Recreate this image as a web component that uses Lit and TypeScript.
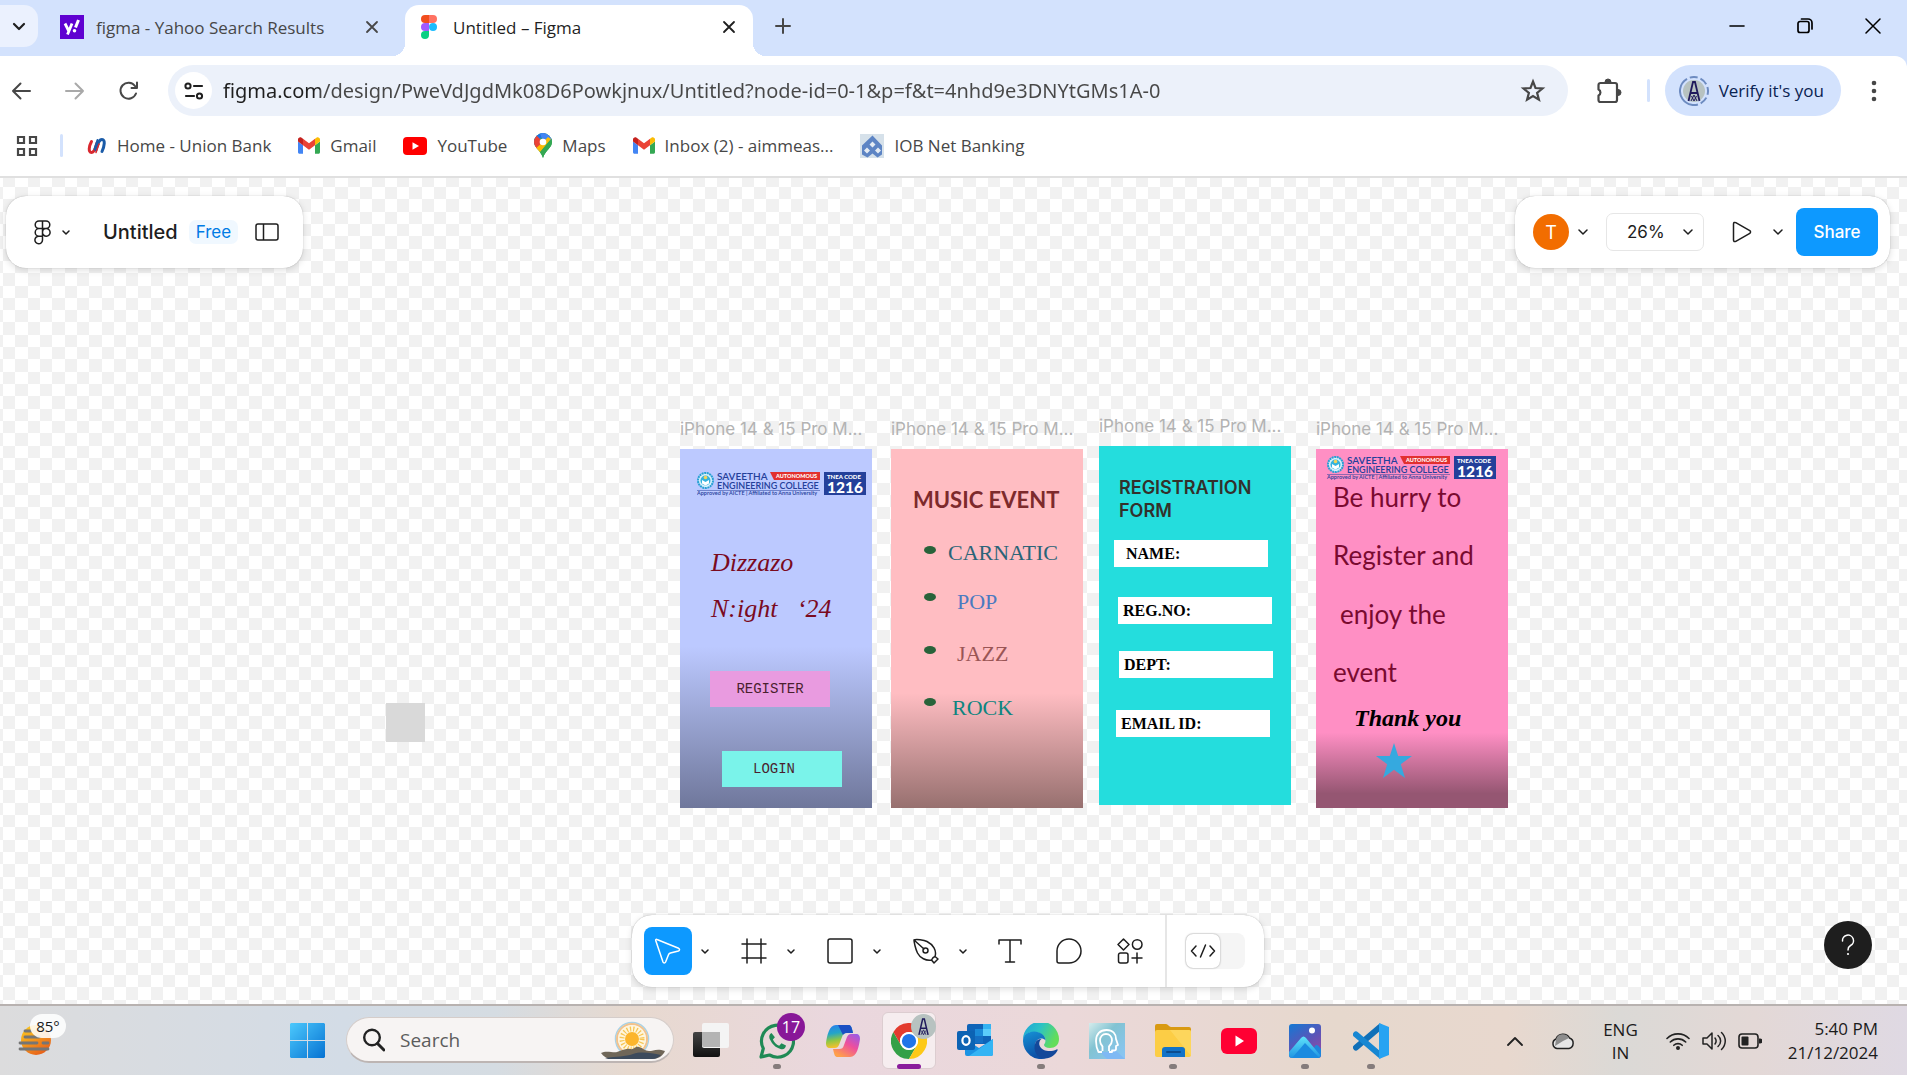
import { LitElement, html, svg, css, nothing, TemplateResult, SVGTemplateResult } from "lit";
import { customElement } from "lit/decorators.js";
import { styleMap } from "lit/directives/style-map.js";
import { classMap } from "lit/directives/class-map.js";

type Drawing = SVGTemplateResult | SVGTemplateResult[];

const icon = (w: number, h: number, body: Drawing, box = `0 0 ${w} ${h}`): TemplateResult =>
  html`<svg width=${w} height=${h} viewBox=${box} fill="none" aria-hidden="true">${body}</svg>`;

const line = (w: number, h: number, d: string, color = "#1e1e1e", width = 1.5): TemplateResult =>
  icon(w, h, svg`<path d=${d} stroke=${color} stroke-width=${width} stroke-linecap="round" stroke-linejoin="round"/>`);

const chevron = line(10, 6, "M1 1l4 4 4-4", "#1e1e1e", 1.5);
const smallChevron = line(8, 5, "M1 1l3 3 3-3");

const gmail = icon(22, 17, svg`
  <path fill="#4285f4" d="M58 108h14V74L52 59v43c0 3.3 2.7 6 6 6"/>
  <path fill="#34a853" d="M120 108h14c3.3 0 6-2.7 6-6V59l-20 15"/>
  <path fill="#fbbc04" d="M120 48v26l20-15v-8c0-7.4-8.5-11.7-14.4-7.2"/>
  <path fill="#ea4335" d="M72 74V48l24 18 24-18v26L96 92"/>
  <path fill="#c5221f" d="M52 51v8l20 15V48l-5.6-4.2C60.5 39.3 52 43.6 52 51"/>`, "52 42 88 66");

const unionBank = icon(20, 18, svg`
  <path d="M4.500 4.500C2 9 1 15.500 4.500 15.500S8.500 10 10 6" stroke="#d9282f" stroke-width="3" stroke-linecap="round"/>
  <path d="M9 13C10.500 8 11.500 2.500 15 2.500S17.500 9 15 14.500" stroke="#1a5ba8" stroke-width="3" stroke-linecap="round"/>
  <path d="M7.500 12L10.500 3" stroke="#1a5ba8" stroke-width="2" stroke-linecap="round"/>
  <path d="M9 15.500l3-8.500" stroke="#d9282f" stroke-width="1.500" stroke-linecap="round"/>`);

const youtube = icon(24, 18, svg`
  <rect width="24" height="18" rx="4" fill="#f00"/><path d="M9.500 5.200l6.500 3.800-6.500 3.800z" fill="#fff"/>`);

const mapsPin = icon(18, 25, svg`
  <clipPath id="pin"><path d="M9 0a9 9 0 0 1 9 9c0 6-6.500 8-9 16C6.500 17 0 15 0 9a9 9 0 0 1 9-9z"/></clipPath>
  <g clip-path="url(#pin)">
    <rect width="18" height="25" fill="#34a853"/>
    <path d="M-2 14L18-6V-9H-2z" fill="#1a73e8"/>
    <path d="M6 0h14v7L9 9z" fill="#4285f4"/>
    <path d="M-1 3l3-1 7 7-7 9-3-5z" fill="#ea4335"/>
    <path d="M1 16L9 9l5-5 3 2L6 19z" fill="#fbbc04"/>
    <path d="M18 5L5 21l4 5 10-12z" fill="#34a853"/>
  </g>
  <circle cx="9" cy="9" r="3.300" fill="#fff"/>`);

const iob = icon(24, 24, svg`
  <rect width="24" height="24" fill="#d6e1ea"/>
  <path d="M12.500 1.500L22 11.500v9l-4.500 3-5-4-5 4-5.500-3v-9z" fill="#5d84c4"/>
  <path d="M12.500 7.500l3 3-3 3-3-3zM7 13.500l3 3-3 3-3-3zM18 13.500l3 3-3 3-3-3z" fill="#e4ebf3"/>`);

const figmaColor = icon(16, 24, svg`
  <path d="M4 0h4v8H4a4 4 0 0 1 0-8z" fill="#f24e1e"/><path d="M8 0h4a4 4 0 0 1 0 8H8z" fill="#ff7262"/>
  <path d="M4 8h4v8H4a4 4 0 0 1 0-8z" fill="#a259ff"/><circle cx="12" cy="12" r="4" fill="#1abcfe"/>
  <path d="M4 16h4v4a4 4 0 1 1-4-4z" fill="#0acf83"/>`);

const yahoo = icon(24, 24, svg`
  <rect width="24" height="24" fill="#5f01d1"/>
  <path d="M5 8.500l3.500 7M12 8.500L7.500 19.500" stroke="#fff" stroke-width="2.800"/>
  <path d="M18.500 5L15.500 12.500" stroke="#fff" stroke-width="3"/><circle cx="14.500" cy="15.800" r="1.800" fill="#fff"/>`);

const tower = (size: number, ring: boolean): TemplateResult => icon(size, size, svg`
  ${ring ? svg`<circle cx="15" cy="15" r="14" stroke="#6d8bc0" stroke-width="2" stroke-dasharray="34 3 8 3 8 3 8 3 8 3 8" transform="rotate(100 15 15)"/>` : nothing}
  <circle cx="15" cy="15" r=${ring ? 11 : 15} fill="#b7c2c0"/>
  <path d="M9.500 25L14 6h2l4.500 19M11.500 17h7" stroke="#201a5c" stroke-width="1.800"/>
  <path d="M12 25l3-6 3 6M12.500 20l2.500 5 2.500-5" stroke="#201a5c" stroke-width="1"/>`, "0 0 30 30");

const chrome = icon(36, 36, svg`
  <path d="M13.600 30L3.200 12A24 24 0 0 0 24 48l10.400-18a12 12 0 0 1-20.800 0z" fill="#34a047"/>
  <path d="M34.400 30L24 48a24 24 0 0 0 20.800-36H24a12 12 0 0 1 10.400 18z" fill="#fdc918"/>
  <path d="M3.200 12a24 24 0 0 1 41.600 0H24a12 12 0 0 0-10.400 18z" fill="#e33b2e"/>
  <circle cx="24" cy="24" r="12" fill="#fff"/><circle cx="24" cy="24" r="9.500" fill="#1f74e8"/>`, "0 0 48 48");

const taskIcons: Record<string, TemplateResult> = {
  view: icon(36, 36, svg`
    <defs><linearGradient id="tv" x2="0" y2="1"><stop stop-color="#444"/><stop offset="1" stop-color="#111"/></linearGradient></defs>
    <rect y="9" width="27" height="25" rx="2" fill="url(#tv)"/><rect x="9" width="27" height="25" rx="2" fill="#f4f4f4"/>
    <path d="M9 9h18v15H11a2 2 0 0 1-2-2z" fill="#b4b4b4"/>`),
  whatsapp: icon(36, 36, svg`
    <path d="M2 34l2.300-8.500A16 16 0 1 1 10.500 32z" stroke="#1f8a55" stroke-width="3.200" stroke-linejoin="round"/>
    <path d="M12.500 10c-2 1-3 3.500-1.500 6.500 2.500 5 5.500 8 10.500 9.500 3 1 5-.5 5.500-3.500l-4.500-2.300-2.300 2.500c-3-1.200-5-3.200-6.300-6.200l2-2.300z" fill="#1f8a55"/>`),
  copilot: icon(34, 32, svg`
    <defs>
      <linearGradient id="cpa" x1="0" y1="0" x2=".2" y2="1"><stop stop-color="#2a7cf0"/><stop offset=".4" stop-color="#23a5c8"/><stop offset=".7" stop-color="#8fc744"/><stop offset="1" stop-color="#f6c02c"/></linearGradient>
      <linearGradient id="cpb" x1="1" y1="0" x2=".3" y2="1"><stop stop-color="#8f5cf0"/><stop offset=".5" stop-color="#ee4f9d"/><stop offset="1" stop-color="#ffa04a"/></linearGradient>
    </defs>
    <path d="M10 0h12c3 0 3.500 2 4.300 5L27 8h-6c-3 0-4 1-5 4l-3 8c-1 2-2 3-4 3H4c-3 0-4-2-4-5C1 11 3 0 10 0z" fill="url(#cpa)"/>
    <path d="M12 0h10c3 0 3.500 2 4.300 5L27 8h-6c-2 0-3 .5-4 2z" fill="#1b4fc4"/>
    <path d="M24 32H12c-3 0-3.500-2-4.300-5L7 24h6c3 0 4-1 5-4l3-8c1-2 2-3 4-3h5c3 0 4 2 4 5-1 7-3 18-10 18z" fill="url(#cpb)"/>`),
  chrome,
  outlook: icon(36, 36, svg`
    <rect x="10" y="1" width="24" height="20" rx="2" fill="#0f64b8"/><path d="M18 6h8v7h-8z" fill="#1b8ad8"/><path d="M26 1h8v12h-8z" fill="#35b3f2"/><path d="M26 6h8v7h-8z" fill="#5bcdfb"/><path d="M18 13h8v7h-8z" fill="#156fc4"/>
    <path d="M8 16l14 9 14-9v15a2 2 0 0 1-2 2H10a2 2 0 0 1-2-2z" fill="#1a93e4"/><path d="M36 16L12 33h22a2 2 0 0 0 2-2z" fill="#34b4f4"/>
    <rect y="8" width="18" height="19" rx="2" fill="#0c63b4"/>
    <ellipse cx="9" cy="17.500" rx="3.600" ry="4.300" stroke="#fff" stroke-width="2.200"/>`),
  edge: icon(36, 36, svg`
    <defs>
      <linearGradient id="ega" x2="1" y2=".4"><stop stop-color="#1fa3dc"/><stop offset=".5" stop-color="#2cc3c4"/><stop offset="1" stop-color="#63dd5a"/></linearGradient>
      <linearGradient id="egb" x2=".3" y2="1"><stop stop-color="#1693d6"/><stop offset="1" stop-color="#0c4fa6"/></linearGradient>
    </defs>
    <path d="M0 17A18 18 0 0 1 36 16c0 6-4 9-9 9-4 0-6-1.500-6-3 0-1 1.500-1.500 1.500-4.500C22.500 12 16 9 11 9 5 9 1 12 0 17z" fill="url(#ega)"/>
    <path d="M0 18C0 12 5 8.500 11 8.500c6 0 11.500 3.500 11.500 9 0 0-1-2-4.500-2-4 0-6 4-6 7.500 0 6 5 12 11 12.300A18 18 0 0 1 0 18z" fill="url(#egb)"/>
    <path d="M12.500 19.500C9 28 15 36 22 35.600c6-.6 10.500-4.200 12.500-8.200.5-1-.3-1.400-1-1-6 3.200-14 1.600-16.500-3-1.500-2.800-.5-6 1.500-7.400-2.500-.2-5 1-6 3.500z" fill="#13489a"/>`),
  head: icon(36, 36, svg`
    <defs><linearGradient id="hd" x2="1" y2="1"><stop stop-color="#d5ecec"/><stop offset=".4" stop-color="#82c3d2"/><stop offset="1" stop-color="#8ac5f6"/></linearGradient></defs>
    <rect width="36" height="36" fill="url(#hd)"/><path d="M11 29h8l6-3 11 10H18z" fill="#7fb9f4"/>
    <path d="M13 29H9.500C8 26 7 22 7 18 7 11 11 7 17.500 7S27 11 27 16l2 6-2 1v3q0 1.500-2 1.500h-2V29h-3" stroke="#fff" stroke-width="1.800" stroke-linejoin="round"/>
    <path d="M13.500 28v-4.500c-2-2-2.500-4-2.500-6 0-4 2.500-6.500 6-6.500s6 2.500 6 6.500c0 2-1 4-3 6V28" stroke="#fff" stroke-width="1.800"/>`),
  folder: icon(36, 33, svg`
    <path d="M0 2a2 2 0 0 1 2-2h9c2 0 3 3 5 3h18a2 2 0 0 1 2 2v8H0z" fill="#d99a12"/>
    <rect y="6" width="36" height="27" rx="2" fill="#fccd45"/><path d="M15 6h19a2 2 0 0 1 2 2v24z" fill="#fdd65c"/>
    <path d="M7 33v-7a3 3 0 0 1 3-3h17a3 3 0 0 1 3 3v7z" fill="#1273c8"/><path d="M12 28h13" stroke="#0b4c8f" stroke-width="2" stroke-linecap="round"/>`),
  youtube: icon(36, 26, svg`<rect width="36" height="26" rx="6" fill="#ff0033"/><path d="M14.500 7.500L23 13l-8.500 5.500z" fill="#fff"/>`),
  photos: icon(34, 34, svg`
    <defs><linearGradient id="ph" x2=".6" y2="1"><stop stop-color="#1379d4"/><stop offset=".6" stop-color="#5b55b8"/><stop offset="1" stop-color="#8b4aa8"/></linearGradient>
    <linearGradient id="pm" x2="0" y2="1"><stop stop-color="#5fe3fb"/><stop offset="1" stop-color="#1f94e2"/></linearGradient></defs>
    <rect x="1" width="32" height="34" rx="3" fill="url(#ph)"/><circle cx="24" cy="6.500" r="3" fill="#fff"/>
    <path d="M20 34l7-12c1-1.500 2.500-1 3.500 0l2.500 3v6a3 3 0 0 1-3 3z" fill="#1d86dd"/>
    <path d="M1 28L13 14c1.500-2 3.500-2 5 0l14 17a3 3 0 0 1-2 3H4a3 3 0 0 1-3-3z" fill="url(#pm)"/>
    <path d="M4 34l13-15 14 14.500-1 .5z" fill="#1b8be0"/>`),
  vscode: icon(36, 36, svg`
    <path d="M3 24.500L27 4" stroke="#1070b8" stroke-width="6" stroke-linecap="round"/>
    <path d="M3 11.500L27 32" stroke="#1787d2" stroke-width="6" stroke-linecap="round"/>
    <path d="M26 0l10 4v28l-10 4z" fill="#27a3f2"/>`),
};

const tasks: { id: string; label: string; open?: boolean; badge?: string }[] = [
  { id: "view", label: "Task view" },
  { id: "whatsapp", label: "WhatsApp", open: true, badge: "17" },
  { id: "copilot", label: "Copilot" },
  { id: "chrome", label: "Chrome" },
  { id: "outlook", label: "Outlook" },
  { id: "edge", label: "Edge", open: true },
  { id: "head", label: "Assistant" },
  { id: "folder", label: "File Explorer", open: true },
  { id: "youtube", label: "YouTube" },
  { id: "photos", label: "Photos", open: true },
  { id: "vscode", label: "Visual Studio Code", open: true },
];

const bookmarks: { text: string; art: TemplateResult }[] = [
  { text: "Home - Union Bank", art: unionBank },
  { text: "Gmail", art: gmail },
  { text: "YouTube", art: youtube },
  { text: "Maps", art: mapsPin },
  { text: "Inbox (2) - aimmeas...", art: gmail },
  { text: "IOB Net Banking", art: iob },
];

/* Checkerboard tile: 16 cells across 197 units, each edge on a whole pixel. */
const CELLS = 16;
const TILE = 197;
const edge = (i: number) => Math.round((i * TILE) / CELLS);
const checkerPath = Array.from({ length: CELLS * CELLS }, (_, n) => [n % CELLS, Math.floor(n / CELLS)])
  .filter(([c, r]) => (c + r) % 2 === 1)
  .map(([c, r]) => `M${edge(c)} ${edge(r)}H${edge(c + 1)}V${edge(r + 1)}H${edge(c)}z`)
  .join("");

const place = (x: number, y: number) => styleMap({ left: `${x}px`, top: `${y}px` });

const collegeLogo = (width: number) => html`
  <svg width=${width} height="24" viewBox="0 0 170 24" role="img" aria-label="Saveetha Engineering College">
    <circle cx="8.500" cy="8.500" r="7.500" fill="#d9f1fb" stroke="#27a0d4" stroke-width="2" stroke-dasharray="2 .6"/>
    <circle cx="8.500" cy="8.500" r="5" fill="#35b3de"/>
    <path d="M5 8l3.500 2L12 8v3.500l-3.500 2-3.500-2z" fill="#fff"/><circle cx="8.500" cy="5.500" r="1.800" fill="#f4d35a"/>
    <path d="M73 0h50v8H77z" fill="#e2302f"/>
    <g font-family="Lato, sans-serif" fill="#24409a">
      <text x="20" y="8" font-size="10" font-weight="600">SAVEETHA</text>
      <text x="20" y="17" font-size="9" font-weight="600">ENGINEERING COLLEGE</text>
      <path d="M0 18h123v.6H0z"/>
      <text x="0" y="23" font-size="5.500" font-weight="600">Approved by AICTE | Affiliated to Anna University</text>
      <rect x="127" width="42" height="23"/>
    </g>
    <g font-family="Lato, sans-serif" fill="#fff" font-weight="900">
      <text x="79" y="6" font-size="5.500">AUTONOMOUS</text>
      <text x="130" y="7" font-size="6">TNEA CODE</text>
      <text x="130" y="21" font-size="15.500">1216</text>
    </g>
  </svg>`;

@customElement("browser-chrome")
export class BrowserChrome extends LitElement {
  static styles = css`
    :host { display: block; font-family: "Open Sans", "Noto Sans", sans-serif; color: #474747; background: #d3e2fd; }
    svg { display: block; flex: none; }
    button { font: inherit; color: inherit; border: 0; padding: 0; background: none; display: flex; align-items: center; justify-content: center; }
    .tabs { display: flex; height: 56px; padding-top: 5px; box-sizing: border-box; align-items: flex-start; font-size: 17px; }
    .search { width: 38px; height: 42px; border-radius: 0 14px 14px 0; background: #ebf1fe; }
    .tab { display: flex; align-items: center; height: 44px; box-sizing: border-box; }
    .tab .title { flex: 1; text-align: left; white-space: nowrap; }
    .idle { width: 354px; margin-right: 13px; padding: 0 13px 0 22px; }
    .idle .title { margin-left: 12px; }
    .active { position: relative; width: 348px; height: 51px; padding: 0 17px 7px 16px; background: #fff; border-radius: 14px 14px 0 0; color: #1f1f1f; }
    .active .title { margin-left: 16px; }
    .active::before, .active::after { content: ""; position: absolute; bottom: 0; width: 13px; height: 13px; }
    .active::before { right: 100%; background: radial-gradient(circle at 0 0, transparent 13px, #fff 13px); }
    .active::after { left: 100%; background: radial-gradient(circle at 100% 0, transparent 13px, #fff 13px); }
    .new { width: 60px; height: 42px; }
    .window { margin-left: auto; display: flex; height: 42px; }
    .window button { width: 68px; }
    .tools { display: flex; align-items: center; height: 69px; background: #fff; border-radius: 0 12px 0 0; }
    .nav { width: 54px; height: 48px; }
    .nav:first-child { width: 48px; padding-right: 6px; }
    .address { flex: 1; display: flex; align-items: center; height: 51px; margin: 0 0 0 12px; border-radius: 26px; background: #ecf1fa; padding: 0 20px 0 7px; }
    .site { width: 37px; height: 37px; border-radius: 50%; background: #fff; flex: none; }
    .url { flex: 1; min-width: 0; border: 0; outline: 0; padding: 0; margin: 0 11px; height: 40px; font: 20px "Noto Sans", "Open Sans", sans-serif; color: transparent; background: linear-gradient(90deg, #1f1f1f 97px, #474747 97px); -webkit-background-clip: text; background-clip: text; }
    .ext { width: 79px; height: 48px; padding-left: 4px; }
    .bar { width: 3px; height: 23px; background: #d3e2fd; border-radius: 2px; }
    .profile { height: 51px; margin-left: 15px; padding: 0 17px 0 14px; border-radius: 26px; background: #d3e2fd; color: #0a2351; font-size: 17px; gap: 10px; }
    .menu { width: 66px; height: 48px; }
    .marks { display: flex; align-items: center; height: 53px; box-sizing: border-box; background: #fff; border-bottom: 2px solid #e0e0e0; font-size: 17px; padding: 0 0 10px 16px; }
    .marks .bar { margin: 0 24px 0 22px; }
    .marks nav { display: flex; gap: 27px; }
    .marks a { display: flex; align-items: center; gap: 10px; color: inherit; text-decoration: none; white-space: nowrap; }
  `;

  render() {
    return html`
      <div class="tabs">
        <button class="search" aria-label="Search tabs">${line(14, 9, "M2 2l5 5 5-5", "#1f1f1f", 2.2)}</button>
        <div class="tab idle">${yahoo}<span class="title">figma - Yahoo Search Results</span>
          <button aria-label="Close tab">${line(14, 14, "M2 2l10 10M12 2L2 12", "#474747", 1.8)}</button></div>
        <div class="tab active">${figmaColor}<span class="title">Untitled – Figma</span>
          <button aria-label="Close tab">${line(14, 14, "M2 2l10 10M12 2L2 12", "#1f1f1f", 1.8)}</button></div>
        <button class="new" aria-label="New tab">${line(16, 16, "M8 1v14M1 8h14", "#474747", 2)}</button>
        <div class="window">
          <button aria-label="Minimise">${line(16, 16, "M1 8h14", "#000", 1.6)}</button>
          <button aria-label="Restore">${line(16, 16, "M1 5.500a2 2 0 0 1 2-2h7a2 2 0 0 1 2 2v7a2 2 0 0 1-2 2H3a2 2 0 0 1-2-2zM4.500 1H11a4 4 0 0 1 4 4v6", "#000", 1.7)}</button>
          <button aria-label="Close">${line(16, 16, "M1 1l14 14M15 1L1 15", "#000", 1.5)}</button>
        </div>
      </div>
      <div class="tools">
        <button class="nav" aria-label="Back">${line(20, 18, "M19 9H2M9.500 1.500L2 9l7.500 7.500", "#474747", 2)}</button>
        <button class="nav" aria-label="Forward">${line(20, 18, "M1 9h17M10.500 1.500L18 9l-7.500 7.500", "#a9a9a9", 2)}</button>
        <button class="nav" aria-label="Reload">${line(20, 20, "M17 12.500A8 8 0 1 1 16 5l1.500 2M18 1.500V7h-5.500", "#474747", 2)}</button>
        <form class="address">
          <button type="button" class="site" aria-label="Site information">${icon(20, 18, svg`
            <circle cx="4" cy="4" r="2.600" stroke="#1f1f1f" stroke-width="2"/><path d="M10 4h8M2 14h8" stroke="#1f1f1f" stroke-width="2.200" stroke-linecap="round"/><circle cx="15.500" cy="14" r="2.600" stroke="#1f1f1f" stroke-width="2"/>`)}</button>
          <input class="url" type="text" aria-label="Address" value="figma.com/design/PweVdJgdMk08D6Powkjnux/Untitled?node-id=0-1&amp;p=f&amp;t=4nhd9e3DNYtGMs1A-0">
          <button type="button" aria-label="Bookmark this tab">${icon(30, 30, svg`<path d="M15 5.500l2.500 6.500 7 .5-5.400 4.400 1.800 6.800-5.900-3.700-5.900 3.700 1.800-6.800L5.500 12.500l7-.5z" stroke="#474747" stroke-width="2.200"/>`)}</button>
        </form>
        <button class="ext" aria-label="Extensions">${icon(26, 26, svg`
          <path d="M2.500 7a2 2 0 0 1 2-2H19a2 2 0 0 1 2 2v15a2 2 0 0 1-2 2H4.500a2 2 0 0 1-2-2v-4.500a3.300 3.300 0 0 0 0-6z" stroke="#474747" stroke-width="2.200" stroke-linejoin="round"/>
          <path d="M9 4a3 3 0 0 1 6 0zM22 11.500a3 3 0 0 1 0 6z" fill="#474747" stroke="#474747"/>`)}</button>
        <span class="bar"></span>
        <button class="profile">${tower(30, true)}<span>Verify it's you</span></button>
        <button class="menu" aria-label="Menu">${icon(6, 22, svg`<g fill="#474747"><circle cx="3" cy="3" r="2.300"/><circle cx="3" cy="11" r="2.300"/><circle cx="3" cy="19" r="2.300"/></g>`)}</button>
      </div>
      <div class="marks">
        <button aria-label="Apps">${icon(22, 22, svg`<g stroke="#474747" stroke-width="2.200"><path d="M2 2h6v6H2zM14 2h6v6h-6zM2 14h6v6H2zM14 14h6v6h-6z"/></g>`)}</button>
        <span class="bar"></span>
        <nav>${bookmarks.map((b) => html`<a href="#">${b.art}<span>${b.text}</span></a>`)}</nav>
      </div>`;
  }
}

@customElement("design-canvas")
export class DesignCanvas extends LitElement {
  static styles = css`
    :host { display: block; position: relative; overflow: hidden; background: #fff; font-family: Inter, sans-serif; color: #1e1e1e; }
    svg { display: block; flex: none; }
    button, select { font: inherit; color: inherit; border: 0; padding: 0; background: none; display: flex; align-items: center; justify-content: center; }
    .checker { position: absolute; inset: 0; width: 100%; height: 100%; }
    .panel { position: absolute; display: flex; align-items: center; height: 72px; box-sizing: border-box; background: #fff; border-radius: 20px; box-shadow: 0 0 1px #0005, 0 2px 7px #0002; }
    .file { left: 6px; top: 18px; padding: 0 24px 0 28px; font-size: 18px; }
    .brand { gap: 11px; }
    .name { margin: 0 0 0 33px; font-size: 20px; line-height: 24px; font-weight: 500; }
    .plan { margin: 0 17px 0 11px; height: 24px; padding: 0 7px; border-radius: 7px; background: #f0f8ff; color: #007be5; font-size: 17px; line-height: 24px; }
    .share-bar { right: 17px; top: 18px; padding: 0 12px 0 18px; font-size: 17px; }
    .me { gap: 9px; }
    .avatar { display: flex; align-items: center; justify-content: center; width: 36px; height: 36px; border-radius: 50%; background: #f26d00; color: #fff; font-size: 18px; }
    .zoom { position: relative; display: flex; align-items: center; margin: 0 28px 0 18px; }
    .zoom select { appearance: none; width: 98px; height: 38px; padding: 0 20px; border: 1px solid #e6e6e6; border-radius: 7px; }
    .zoom svg { position: absolute; right: 11px; pointer-events: none; }
    .present { gap: 21px; }
    .share { margin-left: 13px; width: 82px; height: 48px; border-radius: 8px; background: #0d99ff; color: #fff; font-weight: 500; }
    .dock { left: 50%; bottom: 17px; width: 632px; margin-left: -322px; padding-left: 12px; }
    .tool { width: 48px; height: 48px; border-radius: 8px; }
    .slim { width: 44px; }
    .apart { margin-left: 13px; }
    .on { background: #0d99ff; }
    .more { width: 26px; height: 48px; margin-right: 12px; }
    .dev { display: flex; align-items: center; margin-left: 11px; border-left: 2px solid #e6e6e6; height: 72px; padding-left: 18px; }
    .switch { position: relative; display: flex; width: 60px; height: 36px; border-radius: 8px; background: #f5f5f5; }
    .switch input { appearance: none; margin: 0; width: 60px; height: 36px; }
    .knob { position: absolute; left: 1px; top: 1px; width: 34px; height: 34px; border-radius: 7px; background: #fff; box-shadow: 0 0 2px #0006; display: flex; align-items: center; justify-content: center; }
    .help { position: absolute; right: 35px; bottom: 35px; width: 48px; height: 48px; border-radius: 50%; background: #1e1e1e; }
    .square, .board, .tag, .board > * { position: absolute; }
    .square { width: 39px; height: 39px; background: #d9d9d9; }
    .tag { font-size: 17px; line-height: 20px; color: #b3b3b3; white-space: nowrap; }
    .board { width: 192px; height: 359px; overflow: hidden; }
    .board > * { margin: 0; white-space: pre; line-height: 24px; }
    .board > .art { white-space: normal; }
    .welcome { background: linear-gradient(#bcc9ff 55%, #6f779b); }
    .events { background: linear-gradient(#ffbdc2 68%, #97706f); }
    .form { background: #24dddd; }
    .thanks { background: linear-gradient(#ff8fc4 79%, #955672 96%); }
    .script { font: italic 26px "Liberation Serif", serif; color: #7a0a1e; }
    .cta { width: 120px; height: 36px; font: 14px "Liberation Mono", monospace; color: #4a1f2e; }
    .pink { background: #e99be0; }
    .aqua { background: #7af3ea; padding-right: 16px; }
    .heading { font: bold 22px Lato, sans-serif; color: #7d2a2c; }
    .dot { width: 12px; height: 8px; border-radius: 50%; background: #28633a; }
    .genre { font: 22px "Liberation Serif", serif; }
    .teal { color: #2b6478; } .blue { color: #4a7ac0; } .brown { color: #9a5555; } .green { color: #0e8580; }
    .board > .title { font: 600 18px Inter, sans-serif; line-height: 23px; color: #33302b; }
    .field { display: flex; align-items: center; width: 154px; height: 27px; box-sizing: border-box; background: #fff; color: #000; font: bold 16px "Liberation Serif", serif; }
    .field input { flex: 1; min-width: 0; height: 20px; border: 0; padding: 0; outline: 0; background: none; }
    .inset { padding-left: 12px; }
    .near { padding-left: 5px; }
    .note { font: 26px Lato, sans-serif; color: #7a0a30; }
    .bye { font: italic bold 24px "Liberation Serif", serif; color: #000; }
  `;

  private artboards() {
    const dots = [97, 144, 197, 249];
    const genres = [
      { t: "CARNATIC", x: 57, y: 91, c: "teal" },
      { t: "POP", x: 66, y: 140, c: "blue" },
      { t: "JAZZ", x: 66, y: 192, c: "brown" },
      { t: "ROCK", x: 61, y: 246, c: "green" },
    ];
    const fields = [
      { t: "NAME:", x: 15, y: 94, pad: "inset" },
      { t: "REG.NO:", x: 19, y: 151, pad: "near" },
      { t: "DEPT:", x: 20, y: 205, pad: "near" },
      { t: "EMAIL ID:", x: 17, y: 264, pad: "near" },
    ];
    const notes = [
      { t: "Be hurry to", x: 17, y: 32 },
      { t: "Register and", x: 17, y: 90 },
      { t: "enjoy the", x: 24, y: 149 },
      { t: "event", x: 17, y: 207 },
    ];
    return [
      { x: 680, y: 271, kind: "welcome", body: html`
        <div class="art" style=${place(17, 23)}>${collegeLogo(170)}</div>
        <p class="script" style=${place(31, 99)}>Dizzazo</p>
        <p class="script" style=${place(31, 145)}>N:ight   ‘24</p>
        <button class="cta pink" style=${place(30, 222)}>REGISTER</button>
        <button class="cta aqua" style=${place(42, 302)}>LOGIN</button>` },
      { x: 891, y: 271, kind: "events", body: html`
        <h2 class="heading" style=${place(22, 37)}>MUSIC EVENT</h2>
        ${dots.map((y) => html`<span class="dot" style=${place(33, y)}></span>`)}
        ${genres.map((g) => html`<span class="genre ${g.c}" style=${place(g.x, g.y)}>${g.t}</span>`)}` },
      { x: 1099, y: 268, kind: "form", body: html`
        <h2 class="title" style=${place(20, 30)}>REGISTRATION<br>FORM</h2>
        ${fields.map((f) => html`<label class="field ${f.pad}" style=${place(f.x, f.y)}>${f.t}<input type="text"></label>`)}` },
      { x: 1316, y: 271, kind: "thanks", body: html`
        <div class="art" style=${place(10, 7)}>${collegeLogo(172)}</div>
        ${notes.map((n) => html`<span class="note" style=${place(n.x, n.y)}>${n.t}</span>`)}
        <span class="bye" style=${place(38, 256)}>Thank you</span>
        <div class="art" style=${place(60, 294)}>${icon(36, 35, svg`<path d="M18 0l4.200 13H36l-11.200 8.200L29 35l-11-8.200L7 35l4.200-13.800L0 13h13.800z" fill="#35a9df"/>`)}</div>` },
    ];
  }

  render() {
    const stroke = (d: string, color = "#1e1e1e") => line(26, 26, d, color, 1.5);
    return html`
      <svg class="checker" aria-hidden="true">
        <defs><pattern id="checks" x="3" y="9" width=${TILE} height=${TILE} patternUnits="userSpaceOnUse">
          <path d=${checkerPath} fill="#f1f1f1" shape-rendering="crispEdges"/></pattern></defs>
        <rect width="100%" height="100%" fill="url(#checks)"/>
      </svg>
      <span class="square" style=${place(386, 525)}></span>
      ${this.artboards().map((b) => html`
        <span class="tag" style=${place(b.x, b.y - 30)}>iPhone 14 &amp; 15 Pro M...</span>
        <section class="board ${b.kind}" style=${place(b.x, b.y)}>${b.body}</section>`)}
      <header class="panel file">
        <button class="brand" aria-label="Main menu">${line(17, 25, "M8.500 1H5a3.800 3.800 0 0 0 0 7.600h3.500zM8.500 1H12a3.800 3.800 0 0 1 0 7.600H8.500zM8.500 8.600H5a3.800 3.800 0 0 0 0 7.600h3.500zM12 8.600a3.800 3.800 0 1 1-3.500 3.800A3.800 3.800 0 0 1 12 8.600zM8.500 16.200H5a3.800 3.800 0 1 0 3.500 3.800z")}${smallChevron}</button>
        <h1 class="name">Untitled</h1><span class="plan">Free</span>
        <button aria-label="Toggle sidebar">${line(24, 18, "M3 1h18a2 2 0 0 1 2 2v12a2 2 0 0 1-2 2H3a2 2 0 0 1-2-2V3a2 2 0 0 1 2-2zM8.500 1v16")}</button>
      </header>
      <div class="panel share-bar">
        <button class="me" aria-label="Account"><span class="avatar">T</span>${chevron}</button>
        <div class="zoom"><select aria-label="Zoom"><option>26%</option></select>${chevron}</div>
        <button class="present" aria-label="Present">${line(20, 22, "M1.500 3v16c0 1.500 1 2 2.300 1.300l14-8c1-.6 1-2 0-2.600l-14-8C2.500 1 1.500 1.500 1.500 3z")}${chevron}</button>
        <button class="share">Share</button>
      </div>
      <div class="panel dock" role="toolbar" aria-label="Tools">
        <button class="tool on" aria-label="Move">${stroke("M2 1.500C1 1 .5 1.500 .8 2.700L8 24c.5 1.300 2 1.300 2.600 0l3-7.500c.3-.8 1-1.200 1.800-1.500l8-2c1.400-.5 1.500-2 .2-2.700z", "#fff")}</button>
        <button class="more" aria-label="Move tools">${smallChevron}</button>
        <button class="tool" aria-label="Frame">${stroke("M6 1v24M20 1v24M1 6h24M1 20h24")}</button>
        <button class="more" aria-label="Frame tools">${smallChevron}</button>
        <button class="tool" aria-label="Rectangle">${stroke("M3 1h20a2 2 0 0 1 2 2v20a2 2 0 0 1-2 2H3a2 2 0 0 1-2-2V3a2 2 0 0 1 2-2z")}</button>
        <button class="more" aria-label="Shape tools">${smallChevron}</button>
        <button class="tool" aria-label="Pen">${stroke("M1 2l10 9M1 2c2-1 10 0 13 1.500 6 3 10 9 8 15l3 2.500-4 4-2.500-3C13 23 7 20 4.500 15 2.500 11 1 4 1 2zM18.500 22c1-2 2-3 3.500-3.500M15 12.500a2.500 2.500 0 1 1-5 0 2.500 2.500 0 0 1 5 0z")}</button>
        <button class="more" aria-label="Pen tools">${smallChevron}</button>
        <button class="tool slim" aria-label="Text">${stroke("M2 6V2h22v4M13 2v22M8.500 24h9")}</button>
        <button class="tool apart" aria-label="Comment">${stroke("M13 1a12 12 0 1 1 0 24H3a2 2 0 0 1-2-2V13A12 12 0 0 1 13 1z")}</button>
        <button class="tool apart" aria-label="Actions">${stroke("M6.500 1l5.500 5.500L6.500 12 1 6.500zM25 6.500a4.800 4.800 0 1 1-9.600 0 4.800 4.800 0 0 1 9.600 0zM3.500 15H9a2 2 0 0 1 2 2v6a2 2 0 0 1-2 2H3.500a2 2 0 0 1-2-2v-6a2 2 0 0 1 2-2zM20 15v10M15 20h10")}</button>
        <div class="dev"><label class="switch"><input type="checkbox" aria-label="Dev Mode"><span class="knob">${line(26, 14, "M6 2L1.500 7 6 12M20 2l4.500 5L20 12M15.500 1l-5 12")}</span></label></div>
      </div>
      <button class="help" aria-label="Help">${icon(14, 22, svg`<path d="M1.500 7a5.500 5.500 0 1 1 8 4.500c-2 1.200-2.500 2.200-2.500 4.500" stroke="#fff" stroke-width="1.500" stroke-linecap="round"/><circle cx="7" cy="20" r="1.100" fill="#fff"/>`)}</button>`;
  }
}

@customElement("task-bar")
export class TaskBar extends LitElement {
  static styles = css`
    :host { display: flex; align-items: stretch; height: 69px; border-top: 2px solid #b8b2b0; font-family: "Open Sans", "Noto Sans", sans-serif; font-size: 17px; color: #1b1b1b;
      background: linear-gradient(90deg, #dcdcdd, #d3dce6 18%, #d5dce2 26%, #e7d9cf 33%, #ead7de 44%, #ebd8d9 56%, #e6d8cd 70%, #e8d8ce 79%, #dbd9d6 85%, #e3d8d6 92%, #dfd9e3); }
    svg { display: block; flex: none; }
    button { font: inherit; color: inherit; border: 0; padding: 0; background: none; display: flex; align-items: center; justify-content: center; }
    .weather { position: relative; width: 66px; padding-left: 18px; justify-content: flex-start; }
    .temp { position: absolute; left: 30px; top: 8px; width: 36px; height: 24px; border-radius: 12px; background: #fffd; font-size: 15px; line-height: 24px; text-align: center; }
    .start { margin-left: 216px; width: 50px; }
    .search { display: flex; align-items: center; margin: 11px 0 0 14px; width: 328px; height: 46px; box-sizing: border-box; padding: 0 8px 0 16px; border-radius: 23px; background: #f7f4f3; border: 1px solid #d5cdca; border-bottom: 2px solid #bdb5b3; }
    .search input { flex: 1; min-width: 0; margin-left: 15px; border: 0; outline: 0; padding: 0; background: none; font: 19px "Open Sans", "Noto Sans", sans-serif; }
    .search input::placeholder { color: #5c5c5c; opacity: 1; }
    .apps { display: flex; margin-left: 4px; }
    .app { position: relative; width: 66px; }
    .app::after { content: ""; position: absolute; left: 29px; bottom: 6px; width: 8px; height: 5px; border-radius: 3px; }
    .open::after { background: #857c7c; }
    .chrome::before { content: ""; position: absolute; left: 6px; top: 6px; width: 54px; height: 57px; box-sizing: border-box; border-radius: 6px; background: #f6edef; border: 1px solid #dccdd0; }
    .chrome::after { left: 21px; width: 24px; background: #8a1c9c; }
    .chrome svg { position: relative; }
    .over { position: absolute; right: 6px; top: 8px; }
    .badge { position: absolute; right: 5px; top: 7px; width: 28px; height: 28px; border-radius: 50%; background: #881798; color: #fff; font-size: 16px; line-height: 28px; text-align: center; }
    .tray { margin-left: auto; display: flex; align-items: center; padding-right: 29px; white-space: nowrap; }
    .chev { margin-right: 28px; }
    .lang { margin: 0 28px; line-height: 23px; text-align: center; }
    .status { gap: 12px; }
    .clock { margin-left: 26px; line-height: 24px; text-align: right; }
  `;

  render() {
    return html`
      <button class="weather" aria-label="Weather">${icon(34, 32, svg`
        <defs><linearGradient id="sun" x2=".6" y2="1"><stop stop-color="#ffd21f"/><stop offset="1" stop-color="#e8631a"/></linearGradient></defs>
        <circle cx="18" cy="15" r="15" fill="url(#sun)"/>
        <path d="M7 6h6M7 12h14M2 18h17M25 18h5M2 24h28" stroke="#757575" stroke-width="2.800" stroke-linecap="round"/>`)}<span class="temp">85°</span></button>
      <button class="start" aria-label="Start">${icon(35, 35, svg`
        <defs><linearGradient id="win" x2="1" y2="1"><stop stop-color="#4cc9fd"/><stop offset="1" stop-color="#0672d2"/></linearGradient></defs>
        <path d="M1 0h16v17H0V1zM18 0h16l1 1v16H18zM0 18h17v17H1l-1-1zM18 18h17v16l-1 1H18z" fill="url(#win)"/>`)}</button>
      <label class="search">${icon(22, 24, svg`<circle cx="9" cy="9.500" r="7.800" stroke="#222" stroke-width="2.400"/><path d="M14.500 15.500L21 22" stroke="#222" stroke-width="3" stroke-linecap="round"/>`)}
        <input type="text" placeholder="Search" aria-label="Search">${icon(64, 38, svg`
          <circle cx="31" cy="18" r="16.500" stroke="#a9d2e6" stroke-width="1.500"/><circle cx="31" cy="18" r="15" stroke="#f2c28c" stroke-width="2"/><circle cx="31" cy="18" r="13.800" fill="#fff6dc"/>
          <circle cx="31" cy="18" r="10" stroke="#f7c552" stroke-width="5" stroke-dasharray="1.200 2"/><circle cx="31" cy="18" r="7" fill="#fcb52c"/>
          <path d="M0 32c5-3 12 0 16-1s9-4 13-3 5-3 9-2 6 4 10 4 8-3 16 0c-2 5-7 8-13 8H12c-6 0-10-3-12-6z" fill="#6f6658"/>
          <path d="M4 37c12-2 20-1 28-4s18-1 28 1c-2 2-5 4-9 4H12c-4 0-6 0-8-1z" fill="#3c4a5c"/>`)}</label>
      <div class="apps">${tasks.map((t) => html`
        <button class=${classMap({ app: true, open: !!t.open, chrome: t.id === "chrome" })} aria-label=${t.label}>
          ${taskIcons[t.id]}
          ${t.badge ? html`<span class="badge">${t.badge}</span>` : nothing}
          ${t.id === "chrome" ? html`<span class="over">${tower(25, false)}</span>` : nothing}
        </button>`)}</div>
      <div class="tray">
        <button class="chev" aria-label="Hidden icons">${line(16, 10, "M1 9l7-7 7 7", "#222", 1.8)}</button>
        <button aria-label="OneDrive">${icon(24, 18, svg`
          <path d="M6 16.500A5 5 0 0 1 5 7a7.500 7.500 0 0 1 13.500-1A5.500 5.500 0 0 1 18 16.500z" fill="#e6e6e6" stroke="#222" stroke-width="1.500"/>
          <path d="M5 7.500A7 7 0 0 1 18 6l-6 3-8 5z" fill="#8d8d8d"/>`)}</button>
        <button class="lang">ENG<br>IN</button>
        <button class="status" aria-label="Network, volume and battery">
          ${icon(24, 18, svg`<path d="M1 6.500a15.500 15.500 0 0 1 22 0M4.300 10a11 11 0 0 1 15.400 0M7.800 13.300a6 6 0 0 1 8.400 0" stroke="#222" stroke-width="1.600" stroke-linecap="round"/><circle cx="12" cy="16" r="2" fill="#222"/>`)}
          ${line(24, 20, "M1 7h4l5-5v16l-5-5H1zM13 7c1.500 2 1.500 4 0 6M16 4.500c3.500 3 3.500 8 0 11M19.500 1.500c5 5 5 12 0 17", "#222", 1.5)}
          ${icon(24, 16, svg`<rect x="1" y="1" width="19" height="14" rx="3" stroke="#222" stroke-width="1.600"/><rect x="3.500" y="3.500" width="7" height="9" rx="1" fill="#222"/><path d="M21 5.500h1a2 2 0 0 1 0 5h-1z" fill="#222"/>`)}
        </button>
        <button class="clock">5:40 PM<br>21/12/2024</button>
      </div>`;
  }
}

@customElement("app-root")
export class AppRoot extends LitElement {
  static styles = css`
    :host { display: flex; flex-direction: column; min-height: 100vh; }
    .canvas { flex: 1; }
  `;

  render() {
    return html`<browser-chrome></browser-chrome><design-canvas class="canvas"></design-canvas><task-bar></task-bar>`;
  }
}
